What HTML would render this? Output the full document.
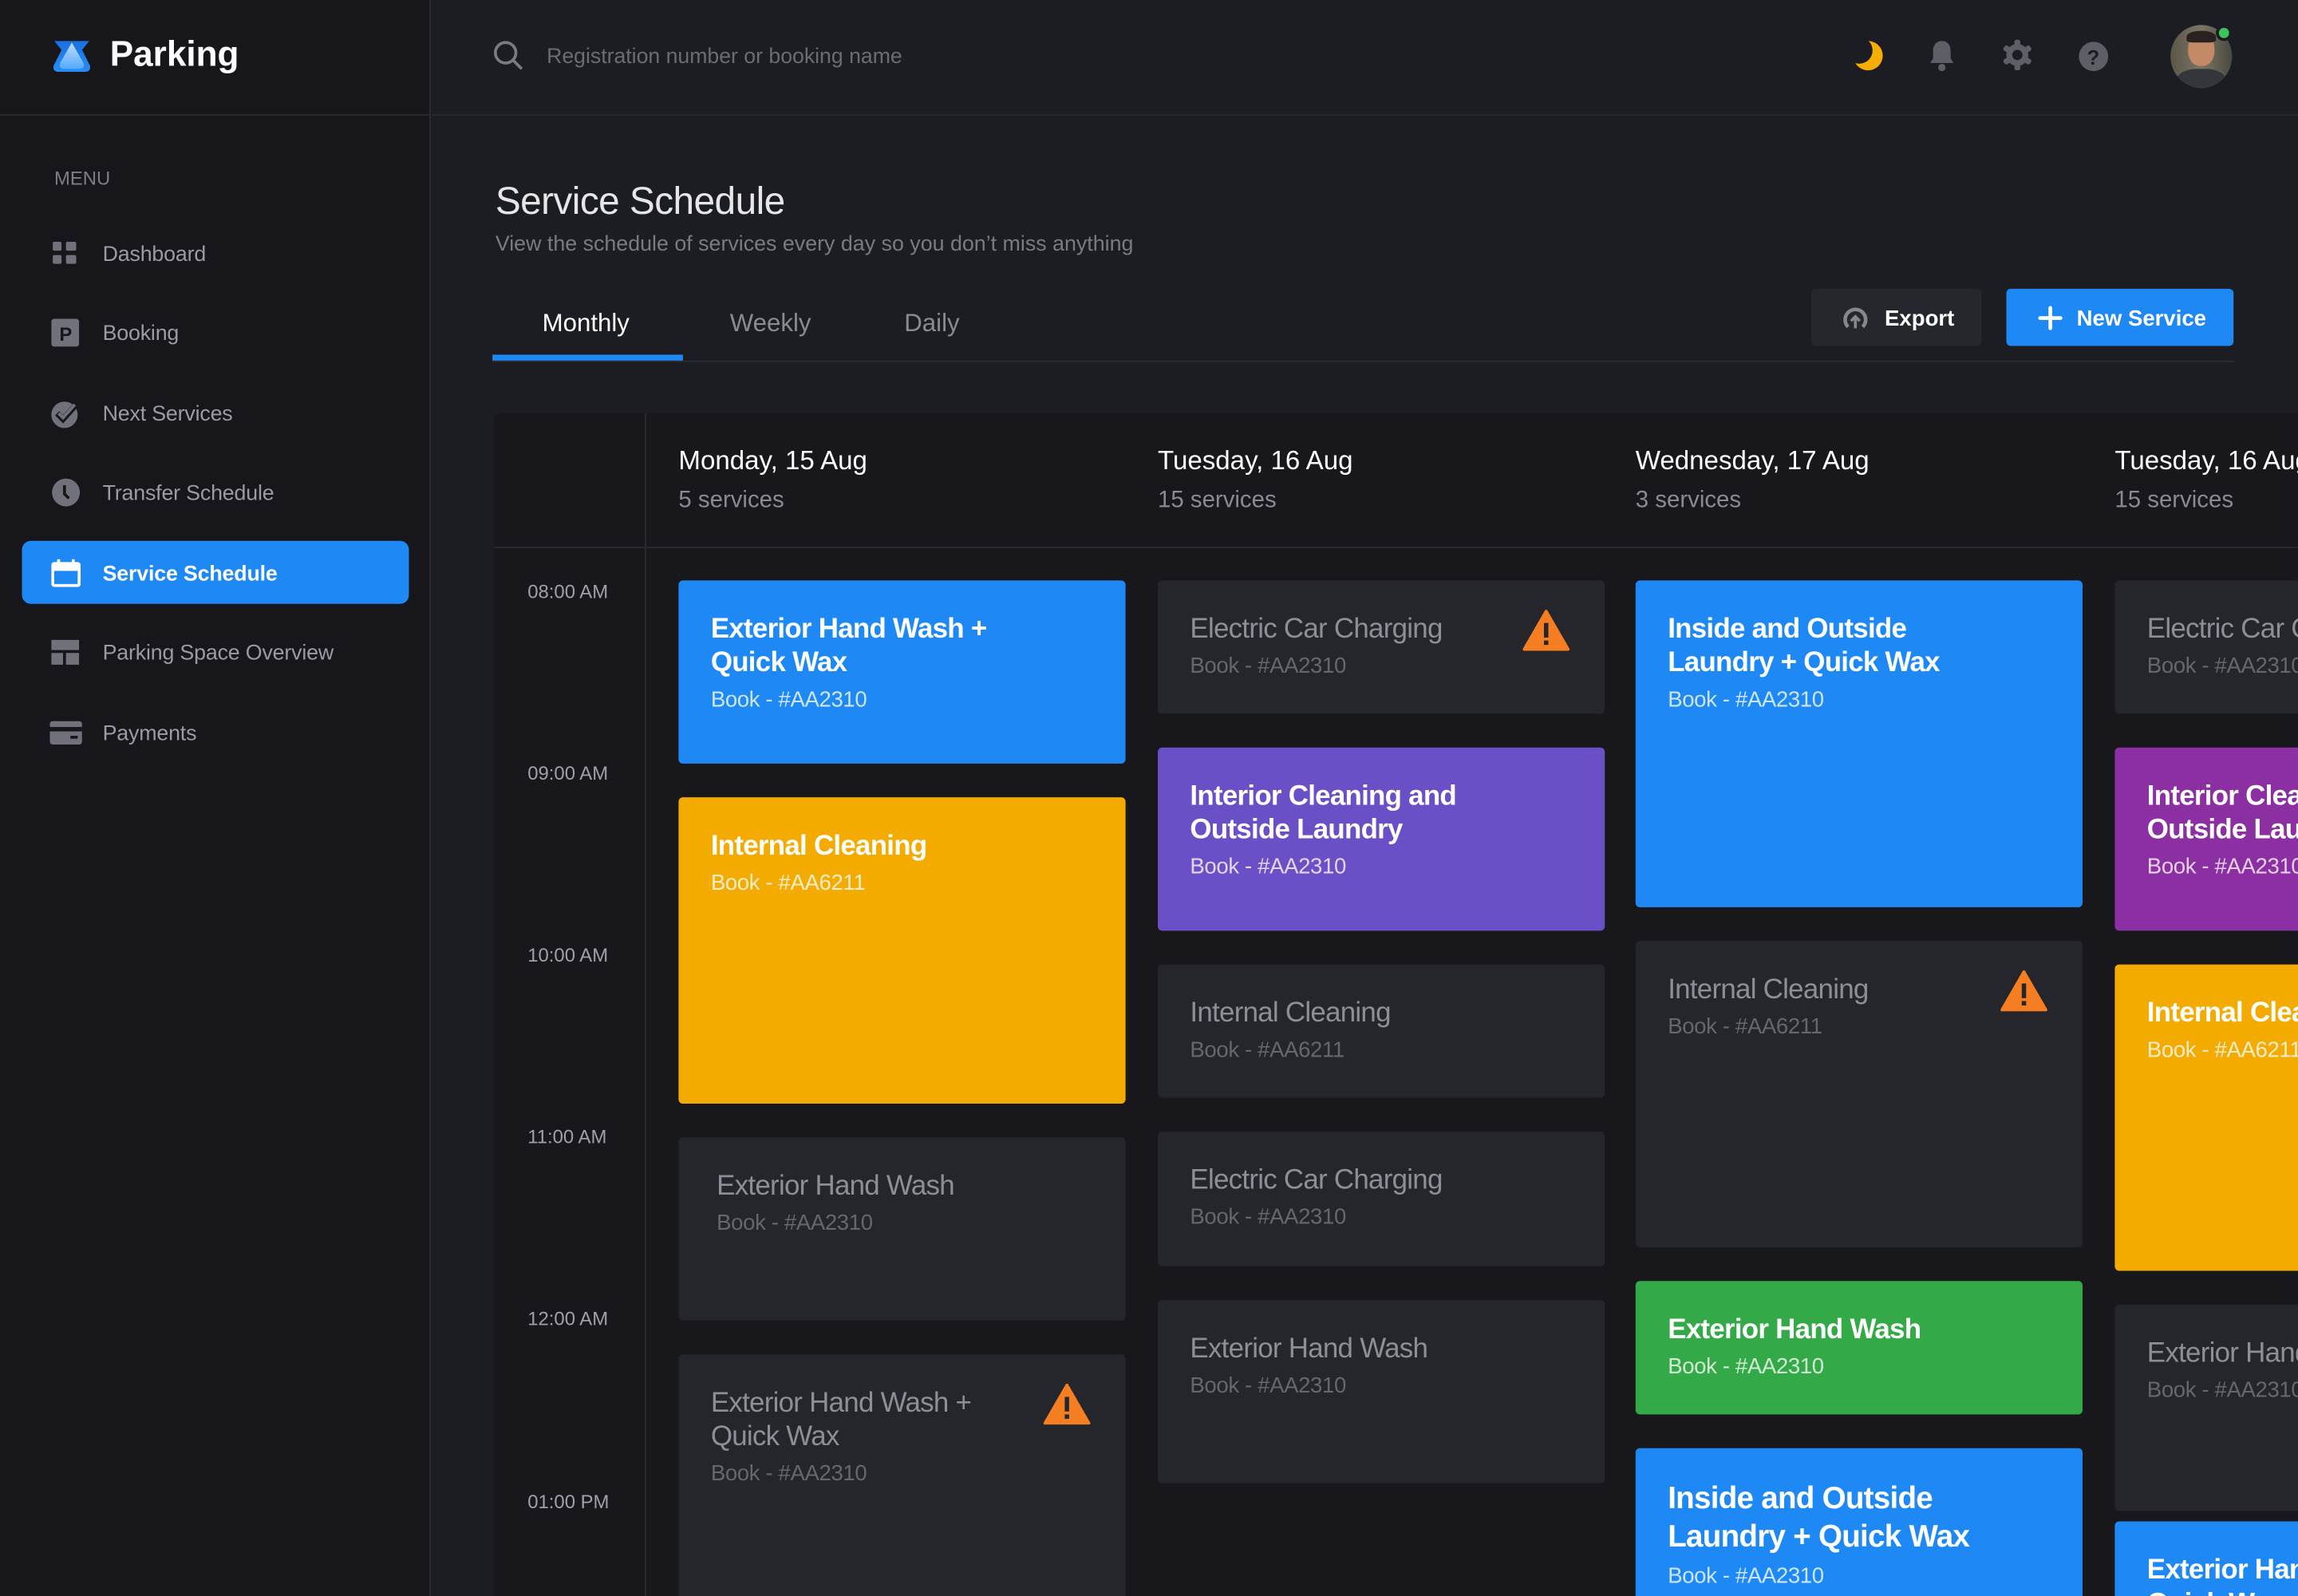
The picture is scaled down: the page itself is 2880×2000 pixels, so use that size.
<!DOCTYPE html>
<html><head><meta charset="utf-8"><style>
*{box-sizing:border-box;margin:0;padding:0}
html,body{width:2880px;height:2000px;overflow:hidden;background:#1c1d22}
#w{width:1568px;height:1089px;transform:scale(1.83673);transform-origin:0 0;position:relative;overflow:hidden;font-family:"Liberation Sans",sans-serif;background:#1c1d22}
.a{position:absolute}
#side{left:0;top:0;width:294px;height:1089px;background:#16161b;border-right:1px solid #2a2b30}
.mi{position:absolute;left:70px;font-size:14.6px;color:#9a9ba3;transform:translateY(-50%);letter-spacing:-0.1px}
.ic{position:absolute;left:35px;transform:translateY(-50%)}
.card{position:absolute;width:305px;border-radius:3px;background:#25262b;padding:22px 22px 0 22px;overflow:hidden}
.card .t{font-size:19px;font-weight:bold;line-height:23px;color:#8e8f96;letter-spacing:-0.4px}
.card .b{font-size:15px;color:#66676d;margin-top:5px;letter-spacing:-0.2px}
.card.c .t{color:#fff}.card.c .b{color:rgba(255,255,255,.78)}
.card.d .t{font-weight:normal}
.tm{position:absolute;left:360px;font-size:13px;color:#a0a1a7}
.warn{position:absolute;right:24px;top:20px}
</style></head><body><div id="w">
<div id="side" class="a">
 <svg class="a" style="left:36px;top:27px" width="26" height="23" viewBox="0 0 26 23"><defs><linearGradient id="g" x1="0" y1="0" x2="0" y2="1"><stop offset="0" stop-color="#1a6fe0"/><stop offset="1" stop-color="#2a8cf5"/></linearGradient><linearGradient id="g2" x1="0" y1="0" x2="0" y2="1"><stop offset="0" stop-color="#dff0ff"/><stop offset="1" stop-color="#59b0ff"/></linearGradient></defs><path d="M1 1H25L20 7L25.5 18Q26 22 22 22H4Q0 22 0.5 18L6 7Z" fill="url(#g)"/><path d="M13 2L21 16Q22 20 18 20H8Q4 20 5 16Z" fill="url(#g2)" opacity=".85"/></svg>
 <div class="a" style="left:75px;top:24px;font-size:24px;font-weight:bold;color:#fff">Parking</div>
 <div class="a" style="left:0;top:78px;width:294px;height:1px;background:#2a2b30"></div>
 <div class="a" style="left:37px;top:114px;font-size:13px;color:#7d7e85">MENU</div>
 <svg class="ic" style="top:173px" width="18" height="18"><rect x="1" y="1" width="6" height="6" rx="1" fill="#70717a"/><rect x="10" y="1" width="7" height="6" rx="1" fill="#70717a"/><rect x="1" y="10" width="6" height="6" rx="1" fill="#70717a"/><rect x="10" y="10" width="7" height="6" rx="1" fill="#70717a"/></svg>
 <div class="mi" style="top:174px">Dashboard</div>
 <svg class="ic" style="top:227px" width="19" height="19"><rect x="0" y="0" width="19" height="19" rx="2" fill="#70717a"/><text x="5.5" y="15" font-size="13" font-weight="bold" fill="#16161b" font-family="Liberation Sans">P</text></svg>
 <div class="mi" style="top:228px">Booking</div>
 <svg class="ic" style="top:282px;left:34px" width="20" height="20"><circle cx="10" cy="11" r="9" fill="#70717a"/><path d="M5 10l4 4 9-10" stroke="#16161b" stroke-width="4" fill="none"/><path d="M6 10l3 3 8-9" stroke="#70717a" stroke-width="2.2" fill="none"/></svg>
 <div class="mi" style="top:283px">Next Services</div>
 <svg class="ic" style="top:336px" width="20" height="20"><circle cx="10" cy="10" r="9.5" fill="#70717a"/><path d="M9 5v6l3 3" stroke="#16161b" stroke-width="2" fill="none"/></svg>
 <div class="mi" style="top:337px">Transfer Schedule</div>
 <div class="a" style="left:15px;top:369px;width:264px;height:43px;background:#1e88f5;border-radius:6px"></div>
 <svg class="ic" style="top:391px" width="20" height="19"><rect x="1" y="3" width="18" height="15" rx="1" fill="none" stroke="#fff" stroke-width="2"/><rect x="1" y="3" width="18" height="5" fill="#fff"/><rect x="4" y="0" width="2" height="4" fill="#fff"/><rect x="14" y="0" width="2" height="4" fill="#fff"/></svg>
 <div class="mi" style="top:392px;color:#fff;font-weight:bold">Service Schedule</div>
 <svg class="ic" style="top:445px" width="19" height="17"><rect x="0" y="0" width="19" height="7" fill="#70717a"/><rect x="0" y="9" width="8" height="8" fill="#70717a"/><rect x="10" y="9" width="9" height="8" fill="#70717a"/></svg>
 <div class="mi" style="top:446px">Parking Space Overview</div>
 <svg class="ic" style="top:500px;left:34px" width="22" height="16"><rect x="0" y="0" width="22" height="16" rx="2" fill="#70717a"/><rect x="0" y="4" width="22" height="3" fill="#16161b"/><rect x="14" y="10" width="5" height="2" fill="#16161b"/></svg>
 <div class="mi" style="top:501px">Payments</div>
</div>
<div class="a" style="left:295px;top:78px;width:1273px;height:1px;background:#2a2b30"></div>
<svg class="a" style="left:337px;top:28px" width="20" height="20"><circle cx="8" cy="8" r="7" stroke="#7a7b82" stroke-width="2" fill="none"/><path d="M13 13l6 6" stroke="#7a7b82" stroke-width="2"/></svg>
<div class="a" style="left:373px;top:31px;font-size:14.5px;color:#6b6c73">Registration number or booking name</div>
<svg class="a" style="left:1265px;top:27px" width="20" height="22"><path d="M10 1a10 10 0 1 1-9 15 9 9 0 0 0 9-15z" fill="#f5ad00"/></svg>
<svg class="a" style="left:1315px;top:27px" width="20" height="22"><path d="M10 1c-4 0-6 3-6 7v5l-2 3h16l-2-3V8c0-4-2-7-6-7z" fill="#5d5e66"/><circle cx="10" cy="19" r="2.5" fill="#5d5e66"/></svg>
<svg class="a" style="left:1366px;top:27px" width="21" height="21" viewBox="0 0 21 21"><g fill="#5d5e66"><circle cx="10.5" cy="10.5" r="7.5"/><rect x="8.5" y="0" width="4" height="21" rx="1.5"/><rect x="8.5" y="0" width="4" height="21" rx="1.5" transform="rotate(60 10.5 10.5)"/><rect x="8.5" y="0" width="4" height="21" rx="1.5" transform="rotate(120 10.5 10.5)"/></g><circle cx="10.5" cy="10.5" r="3.5" fill="#1c1d22"/></svg>
<svg class="a" style="left:1418px;top:28px" width="21" height="21"><ellipse cx="10.5" cy="10.5" rx="10" ry="10" fill="#5d5e66"/><text x="6" y="16" font-size="14" font-weight="bold" fill="#1c1d22" font-family="Liberation Sans">?</text></svg>
<div class="a" style="left:1481px;top:17px;width:42px;height:43px;border-radius:50%;overflow:hidden;background:linear-gradient(90deg,#5b5648,#7b7566 50%,#4a4a40)">
 <div class="a" style="left:12px;top:6px;width:18px;height:22px;border-radius:45%;background:#c48a66"></div>
 <div class="a" style="left:11px;top:4px;width:20px;height:8px;border-radius:50% 50% 20% 20%;background:#2a2220"></div>
 <div class="a" style="left:4px;top:30px;width:34px;height:20px;border-radius:40% 40% 0 0;background:#33363a"></div>
</div>
<div class="a" style="left:1512px;top:17px;width:11px;height:11px;border-radius:50%;background:#3cc35b;border:2px solid #1c1d22"></div>

<div class="a" style="left:338px;top:122px;font-size:26px;color:#e6e6e8;letter-spacing:-0.3px">Service Schedule</div>
<div class="a" style="left:338px;top:159px;font-size:14.6px;color:#7a7b82">View the schedule of services every day so you don’t miss anything</div>
<div class="a" style="left:370px;top:211px;font-size:17px;color:#fff">Monthly</div>
<div class="a" style="left:498px;top:211px;font-size:17px;color:#8a8b92">Weekly</div>
<div class="a" style="left:617px;top:211px;font-size:17px;color:#8a8b92">Daily</div>
<div class="a" style="left:336px;top:246px;width:1188px;height:1px;background:#2c2d32"></div>
<div class="a" style="left:336px;top:242px;width:130px;height:4px;background:#1e88f5"></div>
<div class="a" style="left:1236px;top:197px;width:116px;height:39px;background:#26272c;border-radius:3px"></div>
<svg class="a" style="left:1257px;top:208px" width="18" height="18"><path d="M4 15A7 7 0 1 1 14 15" stroke="#86878d" stroke-width="2.5" fill="none"/><path d="M9 16V9M6 11l3-3 3 3" stroke="#86878d" stroke-width="2" fill="none"/></svg>
<div class="a" style="left:1286px;top:209px;font-size:15px;font-weight:bold;color:#fff">Export</div>
<div class="a" style="left:1369px;top:197px;width:155px;height:39px;background:#1e88f5;border-radius:3px"></div>
<svg class="a" style="left:1390px;top:208px" width="18" height="18"><path d="M9 2v14M2 9h14" stroke="#fff" stroke-width="2.5" stroke-linecap="round"/></svg>
<div class="a" style="left:1417px;top:209px;font-size:15px;font-weight:bold;color:#fff">New Service</div>

<div class="a" style="left:337px;top:282px;width:1231px;height:807px;background:#17171c;border-radius:4px 0 0 0"></div>
<div class="a" style="left:337px;top:373px;width:1231px;height:1px;background:#2a2b30"></div>
<div class="a" style="left:440px;top:282px;width:1px;height:807px;background:#2a2b30"></div>
<div class="a" style="left:463px;top:304px;font-size:18px;color:#fff">Monday, 15 Aug</div><div class="a" style="left:463px;top:333px;font-size:16px;color:#8a8b92">5 services</div>
<div class="a" style="left:790px;top:304px;font-size:18px;color:#fff">Tuesday, 16 Aug</div><div class="a" style="left:790px;top:333px;font-size:16px;color:#8a8b92">15 services</div>
<div class="a" style="left:1116px;top:304px;font-size:18px;color:#fff">Wednesday, 17 Aug</div><div class="a" style="left:1116px;top:333px;font-size:16px;color:#8a8b92">3 services</div>
<div class="a" style="left:1443px;top:304px;font-size:18px;color:#fff;white-space:nowrap">Tuesday, 16 Aug</div><div class="a" style="left:1443px;top:333px;font-size:16px;color:#8a8b92">15 services</div>
<div class="tm" style="top:396px">08:00 AM</div><div class="tm" style="top:520px">09:00 AM</div><div class="tm" style="top:644px">10:00 AM</div><div class="tm" style="top:768px">11:00 AM</div><div class="tm" style="top:892px">12:00 AM</div><div class="tm" style="top:1017px">01:00 PM</div>

<!-- col1 -->
<div class="card c" style="left:463px;top:396px;height:125px;background:#1e88f5"><div class="t">Exterior Hand Wash +<br>Quick Wax</div><div class="b">Book - #AA2310</div></div>
<div class="card c" style="left:463px;top:544px;height:209px;background:#f4ab00"><div class="t">Internal Cleaning</div><div class="b">Book - #AA6211</div></div>
<div class="card d" style="left:463px;top:776px;height:125px;padding-left:26px"><div class="t">Exterior Hand Wash</div><div class="b">Book - #AA2310</div></div>
<div class="card d" style="left:463px;top:924px;height:200px"><div class="t">Exterior Hand Wash +<br>Quick Wax</div><div class="b">Book - #AA2310</div><svg class="warn" width="32" height="28"><path d="M16 1L31 27H1z" fill="#f57e22" stroke="#f57e22" stroke-linejoin="round" stroke-width="2"/><rect x="14.5" y="9" width="3" height="10" fill="#25262b"/><rect x="14.5" y="21" width="3" height="3" fill="#25262b"/></svg></div>
<!-- col2 -->
<div class="card d" style="left:790px;top:396px;height:91px"><div class="t">Electric Car Charging</div><div class="b">Book - #AA2310</div><svg class="warn" width="32" height="28"><path d="M16 1L31 27H1z" fill="#f57e22" stroke="#f57e22" stroke-linejoin="round" stroke-width="2"/><rect x="14.5" y="9" width="3" height="10" fill="#25262b"/><rect x="14.5" y="21" width="3" height="3" fill="#25262b"/></svg></div>
<div class="card c" style="left:790px;top:510px;height:125px;background:#6a50c6"><div class="t">Interior Cleaning and<br>Outside Laundry</div><div class="b">Book - #AA2310</div></div>
<div class="card d" style="left:790px;top:658px;height:91px"><div class="t">Internal Cleaning</div><div class="b">Book - #AA6211</div></div>
<div class="card d" style="left:790px;top:772px;height:92px"><div class="t">Electric Car Charging</div><div class="b">Book - #AA2310</div></div>
<div class="card d" style="left:790px;top:887px;height:125px"><div class="t">Exterior Hand Wash</div><div class="b">Book - #AA2310</div></div>
<!-- col3 -->
<div class="card c" style="left:1116px;top:396px;height:223px;background:#1e88f5"><div class="t">Inside and Outside<br>Laundry + Quick Wax</div><div class="b">Book - #AA2310</div></div>
<div class="card d" style="left:1116px;top:642px;height:209px"><div class="t">Internal Cleaning</div><div class="b">Book - #AA6211</div><svg class="warn" width="32" height="28"><path d="M16 1L31 27H1z" fill="#f57e22" stroke="#f57e22" stroke-linejoin="round" stroke-width="2"/><rect x="14.5" y="9" width="3" height="10" fill="#25262b"/><rect x="14.5" y="21" width="3" height="3" fill="#25262b"/></svg></div>
<div class="card c" style="left:1116px;top:874px;height:91px;background:#34a947"><div class="t">Exterior Hand Wash</div><div class="b">Book - #AA2310</div></div>
<div class="card c" style="left:1116px;top:988px;height:140px;background:#1e88f5"><div class="t" style="font-size:21px;line-height:26px">Inside and Outside<br>Laundry + Quick Wax</div><div class="b">Book - #AA2310</div></div>
<!-- col4 -->
<div class="card d" style="left:1443px;top:396px;height:91px"><div class="t" style="white-space:nowrap">Electric Car Charging</div><div class="b">Book - #AA2310</div></div>
<div class="card c" style="left:1443px;top:510px;height:125px;background:#8c2fa3"><div class="t">Interior Cleaning and<br>Outside Laundry</div><div class="b">Book - #AA2310</div></div>
<div class="card c" style="left:1443px;top:658px;height:209px;background:#f4ab00"><div class="t">Internal Cleaning</div><div class="b">Book - #AA6211</div></div>
<div class="card d" style="left:1443px;top:890px;height:141px"><div class="t">Exterior Hand Wash</div><div class="b">Book - #AA2310</div></div>
<div class="card c" style="left:1443px;top:1038px;height:100px;background:#1e88f5"><div class="t">Exterior Hand Wash +<br>Quick Wax</div></div>
</div></body></html>
